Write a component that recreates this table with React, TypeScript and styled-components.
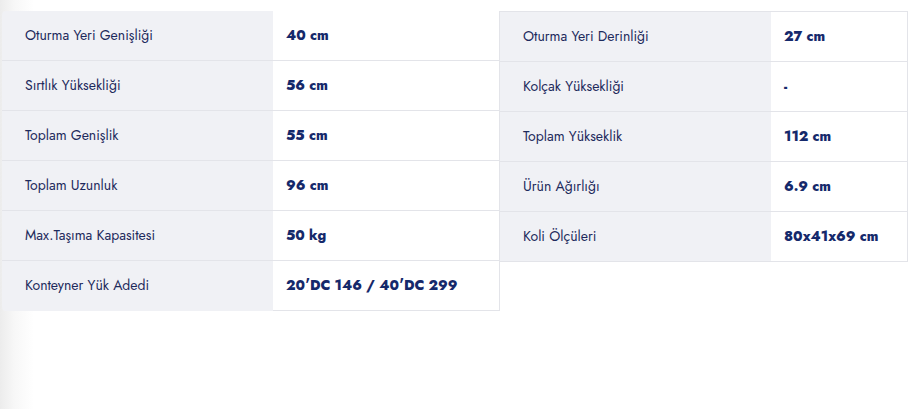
import React from "react";
import styled, { createGlobalStyle } from "styled-components";

const Global = createGlobalStyle`
  html, body { margin: 0; padding: 0; }
  body {
    width: 910px;
    height: 409px;
    overflow: hidden;
    background: linear-gradient(to right, #ececec 0px, #f7f7f7 14px, #ffffff 34px);
    font-family: "Jost", "Lato", "Noto Sans", sans-serif;
  }
`;

const Page = styled.div`
  display: flex;
  align-items: flex-start;
  padding: 11px 0 0 2px;
`;

const Table = styled.div<{ $label: number; $value: number; $boxed?: boolean }>`
  display: grid;
  grid-template-columns: ${(p) => p.$label}px ${(p) => p.$value}px;
  border-radius: ${(p) => (p.$boxed ? "0" : "4px 0 0 4px")};
  border-top: ${(p) => (p.$boxed ? "1px solid #e3e4e9" : "none")};
  border-right: ${(p) => (p.$boxed ? "1px solid #e3e4e9" : "none")};
  overflow: hidden;
`;

const Label = styled.div<{ $last?: boolean }>`
  height: 50px;
  box-sizing: border-box;
  display: flex;
  align-items: center;
  padding: 0 0 2px 23px;
  background: #f0f1f5;
  border-bottom: ${(p) => (p.$last ? "none" : "1px solid #e3e4e9")};
  color: #1d2a5c;
  font-size: 14px;
  font-weight: 400;
`;

const Value = styled.div<{ $rightBorder?: boolean }>`
  height: 50px;
  box-sizing: border-box;
  display: flex;
  align-items: center;
  padding: 0 0 1px 13px;
  background: #ffffff;
  border-bottom: 1px solid #e3e4e9;
  border-right: ${(p) => (p.$rightBorder ? "1px solid #e3e4e9" : "none")};
  color: #15296b;
  font-size: 14px;
  font-weight: 800;
`;

const left: [string, string][] = [
  ["Oturma Yeri Genişliği", "40 cm"],
  ["Sırtlık Yüksekliği", "56 cm"],
  ["Toplam Genişlik", "55 cm"],
  ["Toplam Uzunluk", "96 cm"],
  ["Max.Taşıma Kapasitesi", "50 kg"],
  ["Konteyner Yük Adedi", "20′DC 146 / 40′DC 299"],
];

const right: [string, string][] = [
  ["Oturma Yeri Derinliği", "27 cm"],
  ["Kolçak Yüksekliği", "-"],
  ["Toplam Yükseklik", "112 cm"],
  ["Ürün Ağırlığı", "6.9 cm"],
  ["Koli Ölçüleri", "80x41x69 cm"],
];

export default function App() {
  return (
    <>
      <Global />
      <Page>
        <Table $label={271} $value={227}>
          {left.map(([l, v], i) => (
            <React.Fragment key={l}>
              <Label $last={i === left.length - 1}>{l}</Label>
              <Value $rightBorder>{v}</Value>
            </React.Fragment>
          ))}
        </Table>
        <Table $label={271} $value={136} $boxed>
          {right.map(([l, v]) => (
            <React.Fragment key={l}>
              <Label>{l}</Label>
              <Value>{v}</Value>
            </React.Fragment>
          ))}
        </Table>
      </Page>
    </>
  );
}
